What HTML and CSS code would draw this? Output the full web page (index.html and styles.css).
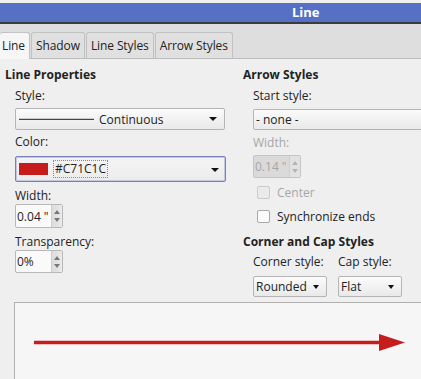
FILE: index.html
```html
<!DOCTYPE html>
<html>
<head>
<meta charset="utf-8">
<title>Line</title>
<link rel="stylesheet" href="styles.css">
</head>
<body>
<div class="dialog">
  <div class="titlebar"><span class="title">Line</span></div>
  <div class="tabs">
    <div class="tab active">Line</div>
    <div class="tab">Shadow</div>
    <div class="tab">Line Styles</div>
    <div class="tab">Arrow Styles</div>
  </div>
  <div class="page">
    <div class="cols">
      <div class="col left">
        <h3>Line Properties</h3>
        <div class="field f-style">
          <div class="label">Style:</div>
          <div class="combo style-combo">
            <span class="sample"></span><span class="text">Continuous</span><span class="arrow"></span>
          </div>
        </div>
        <div class="field f-color">
          <div class="label">Color:</div>
          <div class="combo color-combo">
            <span class="swatch"></span><span class="hex">#C71C1C</span><span class="arrow"></span>
          </div>
        </div>
        <div class="field f-width">
          <div class="label">Width:</div>
          <div class="spin"><span class="val">0.04 "</span><span class="btns"><i class="up"></i><i class="down"></i></span></div>
        </div>
        <div class="field f-trans">
          <div class="label">Transparency:</div>
          <div class="spin short"><span class="val">0%</span><span class="btns"><i class="up"></i><i class="down"></i></span></div>
        </div>
      </div>
      <div class="col right">
        <h3>Arrow Styles</h3>
        <div class="field f-start">
          <div class="label">Start style:</div>
          <div class="combo start-combo"><span class="text">- none -</span><span class="arrow"></span></div>
        </div>
        <div class="field f-awidth disabled">
          <div class="label">Width:</div>
          <div class="spin off"><span class="val">0.14 "</span><span class="btns"><i class="up"></i><i class="down"></i></span></div>
        </div>
        <div class="check c-center disabled"><span class="box"></span>Center</div>
        <div class="check c-sync"><span class="box"></span>Synchronize ends</div>
        <h3 class="sub">Corner and Cap Styles</h3>
        <div class="pair">
          <div class="field">
            <div class="label">Corner style:</div>
            <div class="combo small corner"><span class="text">Rounded</span><span class="arrow"></span></div>
          </div>
          <div class="field">
            <div class="label">Cap style:</div>
            <div class="combo small cap"><span class="text">Flat</span><span class="arrow"></span></div>
          </div>
        </div>
      </div>
    </div>
    <div class="preview">
      <svg width="440" height="80" viewBox="0 0 440 80">
        <line x1="19" y1="39.5" x2="366" y2="39.5" stroke="#c71c1c" stroke-width="3.5"/>
        <polygon points="364,31 390,39.5 364,48" fill="#c71c1c"/>
      </svg>
    </div>
  </div>
</div>
</body>
</html>
```
FILE: styles.css
```css
body{margin:0;background:#efefef;font-family:"Open Sans","Noto Sans",sans-serif;font-size:12px;color:#222;overflow:hidden;}
.dialog{width:470px;height:379px;}
.titlebar{margin-top:3px;height:19px;background:#5570c5;border-bottom:2px solid #3b3b3b;box-shadow:0 1px 0 #9a9a9a;}
.title{display:block;padding-left:292px;color:#fff;font-weight:bold;font-size:13px;line-height:19px;}
.tabs{display:flex;background:#dedede;padding-top:8px;border-bottom:1px solid #bcbcbc;height:26px;}
.tab{height:25px;line-height:25px;padding:0 4px;margin-right:1px;background:#e0e0e0;border:1px solid #c2c2c2;border-bottom:none;border-radius:3px 3px 0 0;letter-spacing:-0.1px;}
.tab.active{background:#f6f6f6;padding:0 4px 0 2px;border-left:none;height:26px;}
.page{background:#efefef;}
.cols{display:grid;grid-template-columns:238px 1fr;padding:8px 0 0 5px;height:235px;}
h3{margin:0;font-size:12px;font-weight:bold;line-height:16px;}
.field{padding-left:10px;}
.label{line-height:16px;}
.combo{display:flex;align-items:center;height:20px;border:1px solid #b5b5b5;border-radius:2px;background:linear-gradient(#fbfbfb,#e9e9e9);position:relative;}
.arrow{position:absolute;right:7px;top:8px;border-left:4px solid transparent;border-right:4px solid transparent;border-top:4px solid #111;}

/* left column */
.f-style .label{margin:5px 0 4px;}
.f-color .label{margin:4px 0 6px;}
.f-width .label,.f-trans .label{margin:6px 0 0;}
.style-combo{width:208px;}
.sample{width:75px;height:1px;background:#444;margin-left:3px;box-shadow:0 -1px 0 #ccc;}
.style-combo .text{margin-left:5px;}
.color-combo{width:209px;height:24px;border-color:#7781b6;box-shadow:inset 0 0 0 1px #c3c8e0;background:linear-gradient(#f4f4f4,#ececec);}
.color-combo .arrow{top:11px;right:6px;}
.swatch{width:29px;height:12px;background:#c71c1c;margin-left:3px;}
.hex{margin-left:5px;padding:0 1px;height:16px;line-height:16px;border:1px dotted #888;}

/* right column */
.f-start .label{margin:5px 0 5px;}
.f-awidth .label{margin:5px 0 4px;}
.start-combo{width:200px;height:19px;}
.start-combo .text{margin-left:2px;}
.c-center{margin-top:6px;}
.c-sync{margin-top:8px;}
h3.sub{margin-top:10px;}
.pair{display:flex;}
.pair .label{margin:4px 0 6px;}
.pair .field + .field{padding-left:11px;}
.combo.small{height:19px;}
.corner{width:72px;}
.cap{width:62px;}
.combo.small .text{margin-left:2px;}
.combo.small .arrow{top:8px;border-left-width:3px;border-right-width:3px;}

.spin{display:flex;width:46px;height:22px;border:1px solid #b8b8b8;border-radius:2px;background:#fafafa;}
.spin.short{height:21px;}
.spin .val{flex:1;display:flex;align-items:center;padding-left:1px;}
.btns{width:10px;display:flex;flex-direction:column;justify-content:center;gap:4px;align-items:center;background:linear-gradient(90deg,#dcdcdc,#eaeaea);border-left:1px solid #cfcfcf;}
.btns i{display:block;border-left:3px solid transparent;border-right:3px solid transparent;}
.btns .up{border-bottom:4px solid #777;}
.btns .down{border-top:4px solid #777;}
.disabled{color:#a6a6a6;}
.spin.off{height:21px;background:#dadada;border-color:#c4c4c4;}
.spin.off .btns{background:#e2e2e2;}
.spin.off .btns .up{border-bottom-color:#b5b5b5;}
.spin.off .btns .down{border-top-color:#b5b5b5;}
.check{display:flex;align-items:center;padding-left:14px;height:16px;}
.box{width:11px;height:11px;border:1px solid #a9a9a9;border-radius:2px;background:#fbfbfb;margin-right:7px;}
.check.disabled .box{border-color:#cbcbcb;background:#eaeaea;}

.preview{margin-left:14px;height:90px;border:1px solid #b0b0b0;background:#f6f6f6;}
.preview svg{display:block;}
```
